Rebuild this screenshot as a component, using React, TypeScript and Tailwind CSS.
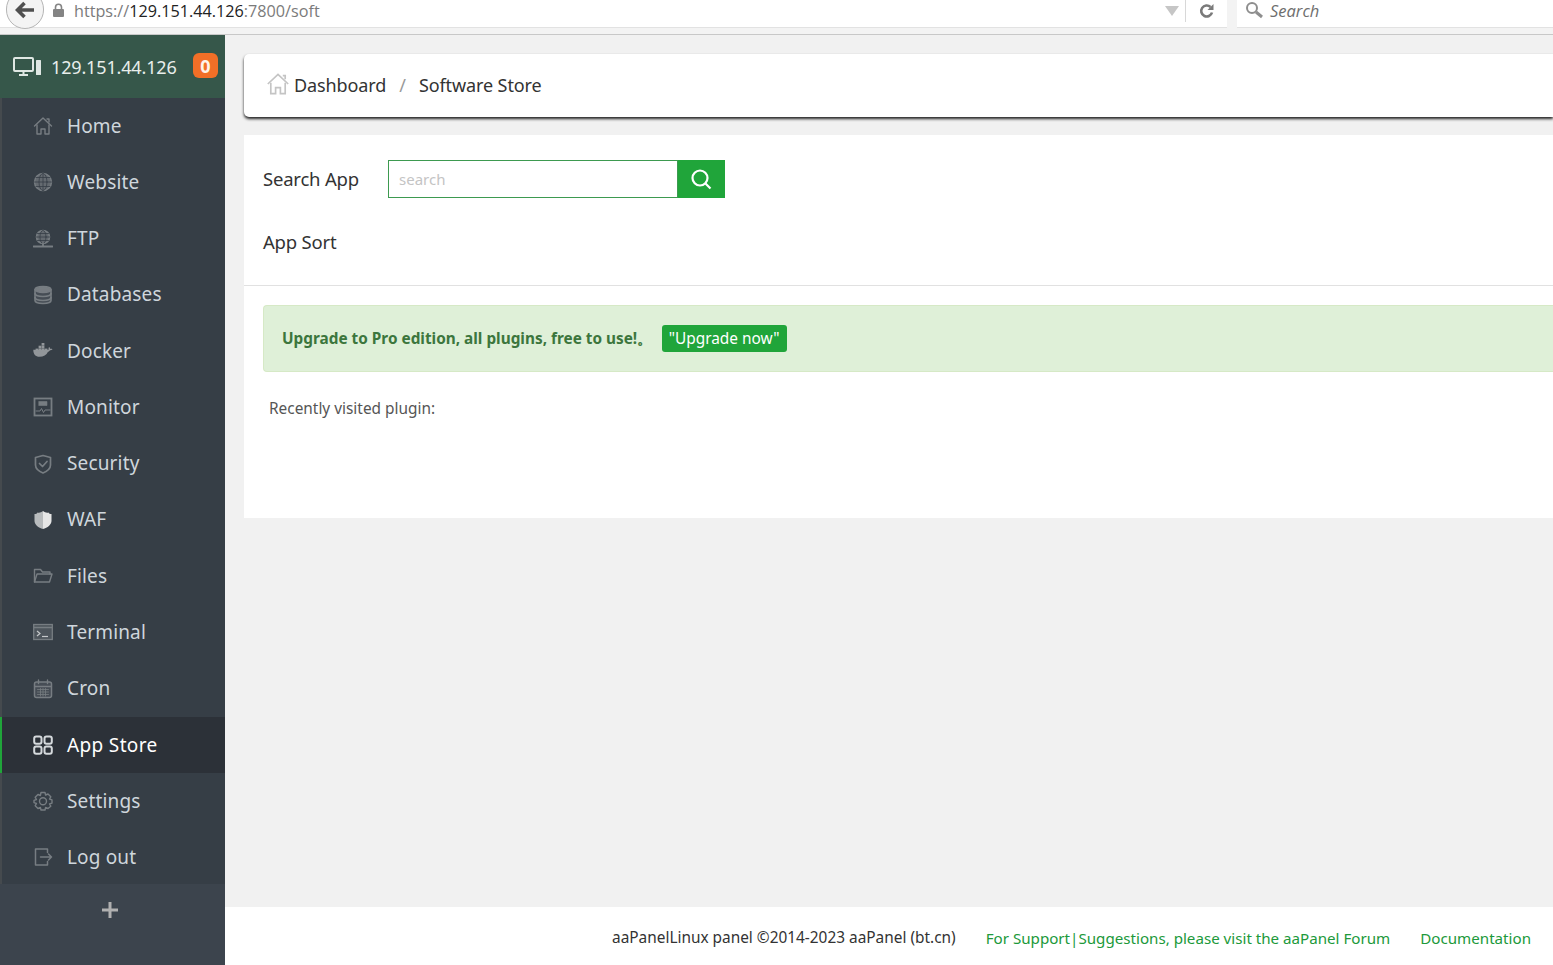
import React from "react";

const I = ({ children, fill = "none" }: { children: React.ReactNode; fill?: string }) => (
  <svg width="20" height="20" viewBox="0 0 20 20" fill={fill} stroke="currentColor" strokeWidth="1.400" strokeLinejoin="round" strokeLinecap="round">
    {children}
  </svg>
);

const HomeIcon = () => (
  <I>
    <path d="M1.500 10 10 2l8.500 8" />
    <path d="M4 9v9h4v-5h4v5h4V9" />
    <path d="M14 3h2v3" />
  </I>
);
const GlobeIcon = () => (
  <I>
    <circle cx="10" cy="10" r="8.500" fill="currentColor" fillOpacity="0.7" />
    <ellipse cx="10" cy="10" rx="4" ry="8.500" stroke="#363e46" strokeWidth="0.8" />
    <path d="M10 1.500v17M1.500 10h17M3 5.500h14M3 14.500h14" stroke="#363e46" strokeWidth="0.8" />
  </I>
);
const FtpIcon = () => (
  <I>
    <circle cx="10" cy="8" r="6.500" fill="currentColor" fillOpacity="0.7" strokeWidth="1.600" />
    <ellipse cx="10" cy="8" rx="3" ry="6.500" stroke="#363e46" strokeWidth="0.8" />
    <path d="M3.500 8h13M4.500 4.500h11M4.500 11.500h11" stroke="#363e46" strokeWidth="0.8" />
    <path d="M10 14.500v2.500M0.500 17.500h19" strokeWidth="1.800" />
  </I>
);
const DbIcon = () => (
  <I>
    <ellipse cx="10" cy="4.500" rx="8" ry="3" fill="currentColor" />
    <path d="M2 4.500v11c0 1.700 3.600 3 8 3s8-1.300 8-3v-11" fill="currentColor" fillOpacity="0.25" strokeWidth="1.600" />
    <path d="M2 8.500c0 1.700 3.600 3 8 3s8-1.300 8-3M2 12.500c0 1.700 3.600 3 8 3s8-1.300 8-3" strokeWidth="1.600" />
  </I>
);
const DockerIcon = () => (
  <svg width="20" height="20" viewBox="0 0 20 20" fill="#92969a">
    <path d="M0.300 10.800h14.500c1 0 1.800-.7 2.200-1.500.7 0 1.900-.3 2.500-1-.5-.5-1.500-.6-2.200-.4-.1-.8-.6-1.400-1.200-1.800-.5.600-.7 1.500-.4 2.300-.4.3-.9.400-1.300.400H.3C.3 13.500 2.500 15.800 6.500 15.800c4 0 7-1.500 8.500-5z" />
    <rect x="2.600" y="7.600" width="2.800" height="3.300" />
    <rect x="5.600" y="7.600" width="2.800" height="3.300" />
    <rect x="8.600" y="7.600" width="2.800" height="3.300" />
    <rect x="11.600" y="7.600" width="2.800" height="3.300" />
    <rect x="5.600" y="4.700" width="2.800" height="2.800" />
    <rect x="8.600" y="4.700" width="2.800" height="2.800" />
    <rect x="8.600" y="2" width="2.800" height="2.600" />
  </svg>
);
const MonitorIcon = () => (
  <I>
    <rect x="1.500" y="1.500" width="17" height="17" strokeWidth="1.800" strokeLinejoin="miter" />
    <path d="M6 4.500h8v4H6z" fill="currentColor" strokeWidth="0.600" />
    <path d="M3 14h4l1.500-2.500 2 4 1.500-2.500h5" strokeWidth="1" />
  </I>
);
const SecurityIcon = () => (
  <I>
    <path d="M2.500 3.500 10 1.500l7.500 2v7.500c0 3.500-4 6.500-7.500 8-3.500-1.500-7.500-4.500-7.500-8z" strokeWidth="1.700" />
    <path d="m6.500 9.500 3 3 4.500-5" strokeWidth="1.700" />
  </I>
);
const WafIcon = () => (
  <svg width="20" height="20" viewBox="0 0 20 20">
    <path d="M10 1C8 2.500 6.500 3 4.500 2.500 4 3.500 3 4 1.500 4v7c0 3.500 4 7 8.500 8z" fill="#b8bbbd" />
    <path d="M10 1c2 1.500 3.500 2 5.500 1.500.5 1 1.500 1.500 3 1.500v7c0 3.500-4 7-8.500 8z" fill="#e6e6e6" />
  </svg>
);
const FilesIcon = () => (
  <I>
    <path d="M1.500 16V3.500h6L9.500 6H17v2" />
    <path d="M1.500 16 4 8h15l-2.500 8z" />
  </I>
);
const TerminalIcon = () => (
  <svg width="20" height="20" viewBox="0 0 20 20" fill="none" stroke="currentColor">
    <rect x="0.700" y="2.500" width="18.600" height="15" strokeWidth="1.300" fill="#4e555c" />
    <path d="M1 5.500h18" strokeWidth="1.500" />
    <path d="m4 9 3 2.500L4 14" stroke="#c5c8ca" strokeWidth="1.200" />
    <path d="M9 14.500h6" stroke="#c5c8ca" strokeWidth="1.200" />
  </svg>
);
const CronIcon = () => (
  <I>
    <rect x="1.500" y="3" width="17" height="15.500" rx="2" strokeWidth="1.500" fill="currentColor" fillOpacity="0.25" />
    <path d="M5.500 1v3.500M14.500 1v3.500M2 7.500h16" />
    <path d="M4.500 10.500h11M4.500 13h11M4.500 15.500h11M7.500 9.500v7.500M10 9.500v7.500M12.500 9.500v7.500" strokeWidth="0.800" />
  </I>
);
const StoreIcon = () => (
  <svg width="20" height="20" viewBox="0 0 20 20" fill="none" stroke="currentColor" strokeWidth="2">
    <rect x="1.200" y="1.500" width="7.300" height="7.300" rx="2" />
    <rect x="11.500" y="1.500" width="7.300" height="7.300" rx="2" />
    <rect x="1.200" y="11.500" width="7.300" height="7.300" rx="2" />
    <rect x="11.500" y="11.500" width="7.300" height="7.300" rx="2" />
  </svg>
);
const SettingsIcon = () => (
  <I>
    <path d="M8 1.500h4l.6 2.500 2.400-1 2.800 2.800-1.300 2.200 2.500.9v3.200l-2.500.9 1.300 2.200L15 17.500l-2.400-1-.6 2.500H8l-.6-2.500-2.400 1-2.800-2.800 1.300-2.200-2.500-.9V9.400l2.500-.9-1.300-2.200L5 3.500l2.400 1z" />
    <circle cx="10" cy="10.300" r="3.500" />
  </I>
);
const LogoutIcon = () => (
  <I>
    <path d="M14.500 5.500V2h-12v16h12v-3.500" strokeWidth="1.500" />
    <path d="M7.500 10h11M15.500 7l3 3-3 3" strokeWidth="1.500" />
  </I>
);

const items: [string, React.ReactNode][] = [
  ["Home", <HomeIcon />],
  ["Website", <GlobeIcon />],
  ["FTP", <FtpIcon />],
  ["Databases", <DbIcon />],
  ["Docker", <DockerIcon />],
  ["Monitor", <MonitorIcon />],
  ["Security", <SecurityIcon />],
  ["WAF", <WafIcon />],
  ["Files", <FilesIcon />],
  ["Terminal", <TerminalIcon />],
  ["Cron", <CronIcon />],
  ["App Store", <StoreIcon />],
  ["Settings", <SettingsIcon />],
  ["Log out", <LogoutIcon />],
];

function BrowserBar() {
  return (
    <div className="h-[35px] shrink-0 flex items-center bg-[#f3f3f3] border-b border-[#c8c8c8] overflow-hidden font-['Open_Sans',sans-serif]">
      <div className="relative flex-1 h-[28px] self-start bg-white flex items-center border-b border-[#e2e2e2]">
        <div className="absolute left-[6px] -top-[10px] w-[38px] h-[39px] rounded-full border border-[#b5b5b5] bg-[#f4f4f4] flex items-center justify-center">
          <svg width="20" height="18" viewBox="0 0 20 18" fill="none" stroke="#505050" strokeWidth="3.600">
            <path d="M9.500 2 2.500 9l7 7M3 9h16" />
          </svg>
        </div>
        <svg width="13" height="15" viewBox="0 0 13 15" className="ml-[52px] -mt-[6px]" fill="#848484">
          <path d="M3.500 6V4.200a3 3 0 0 1 6 0V6" fill="none" stroke="#848484" strokeWidth="1.600" />
          <rect x="1" y="6" width="11" height="8" rx="1" />
        </svg>
        <span className="ml-[9px] -mt-[4px] text-[16.200px] leading-none text-[#7b7b7b] whitespace-nowrap">
          https://<span className="text-[#222]">129.151.44.126</span>:7800/soft
        </span>
        <svg width="14" height="10" viewBox="0 0 14 10" className="ml-auto -mt-[6px]" fill="#c6c6c6"><path d="M0 0h14L7 10z" /></svg>
        <div className="ml-[6px] w-px h-[22px] self-start bg-[#d8d8d8]" />
        <div className="w-[41px] flex justify-center -mt-[6px]">
          <svg width="16" height="16" viewBox="0 0 16 16" fill="none" stroke="#7a7a7a" strokeWidth="2.600">
            <path d="M13 9.500A5.500 5.500 0 1 1 11.500 4" />
            <path d="M14.500 1v6h-6z" fill="#7a7a7a" stroke="none" />
          </svg>
        </div>
      </div>
      <div className="w-[10px] h-full bg-[#f3f3f3]" />
      <div className="w-[316px] h-[28px] self-start bg-white flex items-start border-b border-[#e2e2e2]">
        <svg width="18" height="18" viewBox="0 0 18 18" className="ml-[8px] mt-[1px]" fill="none" stroke="#8e8e8e">
          <circle cx="7" cy="7" r="5" strokeWidth="2" />
          <path d="m11 11 6 5" strokeWidth="3" />
        </svg>
        <span className="ml-[7px] mt-[1px] text-[16.500px] italic leading-[20px] text-[#6e6e6e]">Search</span>
      </div>
    </div>
  );
}

function Sidebar() {
  return (
    <aside className="w-[225px] shrink-0 flex flex-col bg-[#3c444d] font-['Noto_Sans',sans-serif]">
      <div className="h-[63px] shrink-0 bg-[#36574a] flex items-center relative text-[#e8eeeb]">
        <svg width="28" height="20" viewBox="0 0 28 20" className="ml-[13px]" fill="none" stroke="#dfe7e3">
          <rect x="1" y="1" width="19" height="13" rx="1" strokeWidth="2" />
          <path d="M10.500 14v3M6 18h9" strokeWidth="2" />
          <rect x="23" y="3" width="5" height="15" rx="0.500" fill="#dfe7e3" stroke="none" />
        </svg>
        <span className="ml-[10px] text-[18px] leading-none tracking-[-0.15px]">129.151.44.126</span>
        <span className="absolute left-[193px] top-[18px] w-[25px] h-[25px] rounded-[6px] bg-[#f26f27] text-[#fff3e8] text-[18px] leading-none font-bold flex items-center justify-center">0</span>
      </div>
      <nav className="h-[786px] shrink-0 flex flex-col bg-[#363e46] border-l-2 border-[#454a4e]">
        {items.map(([label, icon]) => {
          const active = label === "App Store";
          return (
            <div
              key={label}
              className={
                active
                  ? "h-[56.250px] shrink-0 -ml-[2px] pl-[31px] border-l-2 border-[#20a53a] bg-[#2c3138] flex items-center text-white text-[19px] tracking-[0.35px]"
                  : "h-[56.250px] shrink-0 pl-[31px] flex items-center text-[#cfd6dc] text-[19px] tracking-[0.15px]"
              }
            >
              <span className={active ? "w-[34px] text-[#d5d9dc] flex" : "w-[34px] text-[#777d82] flex"}>{icon}</span>
              <span className={active ? "leading-none mt-[1px]" : "leading-none"}>{label}</span>
            </div>
          );
        })}
      </nav>
      <div className="flex-1 flex justify-center pt-[18px] pr-[6px]">
        <svg width="16" height="16" viewBox="0 0 16 16" stroke="#b0b0b0" strokeWidth="3"><path d="M8 0v16M0 8h16" /></svg>
      </div>
    </aside>
  );
}

export default function App() {
  return (
    <div className="w-[1553px] h-[965px] flex flex-col overflow-hidden bg-[#f1f1f1]">
      <BrowserBar />
      <div className="flex-1 flex min-h-0">
        <Sidebar />
        <main className="flex-1 flex flex-col min-w-0 font-['Noto_Sans',sans-serif]">
          <div className="flex-1 pl-[19px] pt-[19px]">
            <div className="h-[63px] bg-white rounded-l-[5px] shadow-[0_2px_3px_#222] flex items-center pl-[22px] text-[18px] text-[#333] tracking-[-0.1px]">
              <svg width="24" height="24" viewBox="0 0 20 20" fill="none" stroke="#c4c4c4" strokeWidth="1.400" className="-mt-[3px]">
                <path d="M1.500 10 10 2l8.500 8" />
                <path d="M4 9v9h4v-5h4v5h4V9" />
                <path d="M14 3h2v3" />
              </svg>
              <span className="ml-[4px]">Dashboard</span>
              <span className="ml-[13px] text-[#999]">/</span>
              <span className="ml-[13px]">Software Store</span>
            </div>
            <section className="mt-[18px] h-[383px] bg-white">
              <div className="h-[151px] border-b border-[#e1e1e1] pl-[19px] pt-[25px] text-[18.500px] text-[#333] tracking-[-0.2px]">
                <div className="flex items-center h-[38px]">
                  <span className="w-[125px]">Search App</span>
                  <div className="w-[290px] h-[38px] border border-[#3d9a50] flex items-center pl-[10px] text-[15px] text-[#c4c4c4] tracking-normal">search</div>
                  <div className="w-[47px] h-[38px] bg-[#20a53a] flex items-center justify-center">
                    <svg width="22" height="22" viewBox="0 0 22 22" fill="none" stroke="#fff" strokeWidth="2.200" className="-ml-[1px]">
                      <circle cx="10" cy="10" r="7.500" />
                      <path d="m15.500 15.500 5 5" />
                    </svg>
                  </div>
                </div>
                <div className="mt-[27px] leading-[34px] h-[34px]">App Sort</div>
              </div>
              <div className="ml-[19px] mt-[19px] h-[67px] bg-[#dff0d8] border border-[#d6e9c6] border-r-0 rounded-l-[4px] flex items-center pl-[18px] text-[15.350px] text-[#3c763d]">
                <b className="font-bold whitespace-nowrap">Upgrade to Pro edition, all plugins, free to use!。</b>
                <span className="ml-[9.500px] h-[27px] px-[7px] rounded-[3px] bg-[#20a53a] text-white flex items-center text-[15.400px]">"Upgrade now"</span>
              </div>
              <div className="ml-[25px] mt-[27px] text-[15.400px] leading-[20px] text-[#555]">Recently visited plugin:</div>
            </section>
          </div>
          <footer className="h-[58px] shrink-0 bg-white flex items-center justify-end pr-[22px] pt-[4px] text-[15.150px] whitespace-nowrap">
            <span className="text-[#333] text-[15.400px]">aaPanelLinux panel ©2014-2023 aaPanel (bt.cn)</span>
            <span className="ml-[30px] text-[#20993a]">For Support|Suggestions, please visit the aaPanel Forum</span>
            <span className="ml-[30px] text-[#20993a]">Documentation</span>
          </footer>
        </main>
      </div>
    </div>
  );
}
